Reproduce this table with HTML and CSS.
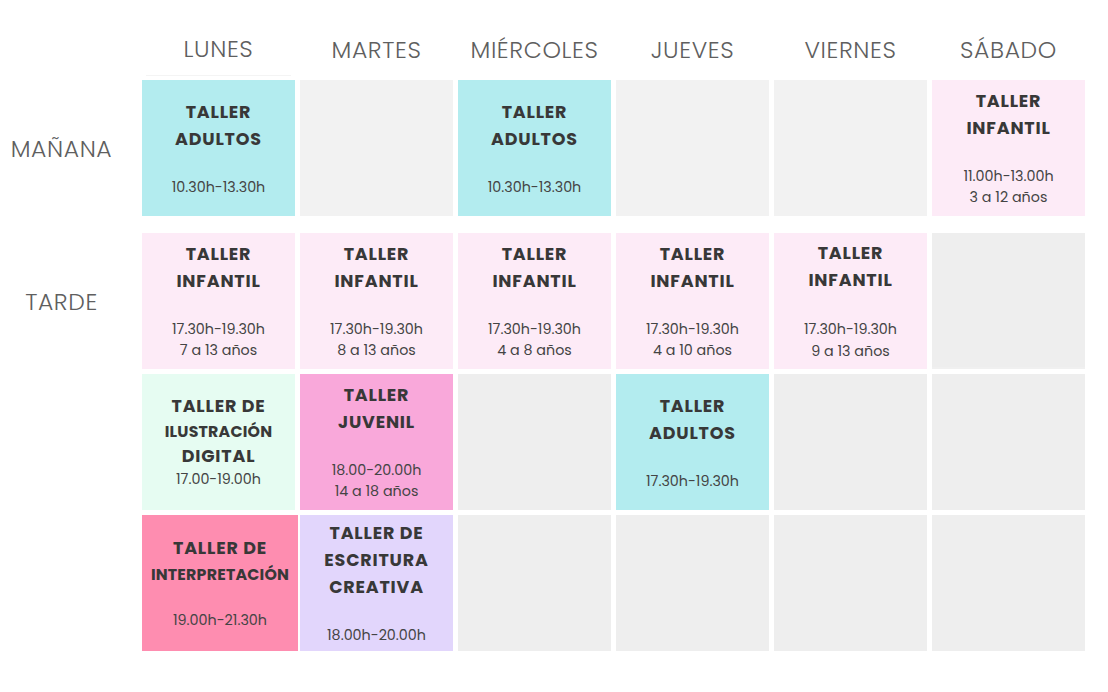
FILE: index.html
```html
<!DOCTYPE html>
<html lang="es">
<head>
<meta charset="utf-8">
<title>Horario de talleres</title>
<link rel="stylesheet" href="styles.css">
</head>
<body>
<main class="schedule">
  <div class="row head">
    <div class="label"></div>
    <div class="day first">LUNES</div>
    <div class="day">MARTES</div>
    <div class="day">MIÉRCOLES</div>
    <div class="day">JUEVES</div>
    <div class="day">VIERNES</div>
    <div class="day">SÁBADO</div>
  </div>

  <section class="block">
    <div class="row">
      <div class="label">MAÑANA</div>
      <div class="cell adult"><p class="title">TALLER<br>ADULTOS</p><p class="time">10.30h-13.30h</p></div>
      <div class="cell empty-light"></div>
      <div class="cell adult"><p class="title">TALLER<br>ADULTOS</p><p class="time">10.30h-13.30h</p></div>
      <div class="cell empty-light"></div>
      <div class="cell empty-light"></div>
      <div class="cell kids"><p class="title">TALLER<br>INFANTIL</p><p class="time">11.00h-13.00h<br>3 a 12 años</p></div>
    </div>
  </section>

  <section class="block tarde">
    <div class="row">
      <div class="label">TARDE</div>
      <div class="cell kids"><p class="title">TALLER<br>INFANTIL</p><p class="time">17.30h-19.30h<br>7 a 13 años</p></div>
      <div class="cell kids"><p class="title">TALLER<br>INFANTIL</p><p class="time">17.30h-19.30h<br>8 a 13 años</p></div>
      <div class="cell kids"><p class="title">TALLER<br>INFANTIL</p><p class="time">17.30h-19.30h<br>4 a 8 años</p></div>
      <div class="cell kids"><p class="title">TALLER<br>INFANTIL</p><p class="time">17.30h-19.30h<br>4 a 10 años</p></div>
      <div class="cell kids"><p class="title">TALLER<br>INFANTIL</p><p class="time loose">17.30h-19.30h<br>9 a 13 años</p></div>
      <div class="cell empty edge"></div>
    </div>
    <div class="row">
      <div class="label"></div>
      <div class="cell mint"><p class="title tight">TALLER DE<br><span class="small">ILUSTRACIÓN</span><br>DIGITAL</p><p class="time nogap">17.00-19.00h</p></div>
      <div class="cell juvenil"><p class="title">TALLER<br>JUVENIL</p><p class="time">18.00-20.00h<br>14 a 18 años</p></div>
      <div class="cell empty"></div>
      <div class="cell adult"><p class="title">TALLER<br>ADULTOS</p><p class="time">17.30h-19.30h</p></div>
      <div class="cell empty"></div>
      <div class="cell empty"></div>
    </div>
    <div class="row">
      <div class="label"></div>
      <div class="cell drama"><p class="title mid">TALLER DE<br><span class="small">INTERPRETACIÓN</span></p><p class="time">19.00h-21.30h</p></div>
      <div class="cell lilac"><p class="title">TALLER DE<br>ESCRITURA<br>CREATIVA</p><p class="time">18.00h-20.00h</p></div>
      <div class="cell empty"></div>
      <div class="cell empty"></div>
      <div class="cell empty"></div>
      <div class="cell empty"></div>
    </div>
  </section>
</main>
</body>
</html>
```
FILE: styles.css
```css
* { box-sizing: border-box; }

html, body {
  margin: 0;
  padding: 0;
  background: #ffffff;
}

body {
  font-family: "Poppins", "Inter", "Liberation Sans", sans-serif;
  color: #3c3c3c;
}

.schedule {
  padding-top: 22px;
  width: 1108px;
}

.block {
  display: flow-root;
}

.row {
  display: grid;
  grid-template-columns: 137px repeat(6, 153px);
  column-gap: 5px;
  margin-bottom: 5px;
}

.head {
  height: 53px;
  align-items: center;
}

.day {
  text-align: center;
  font-size: 23.5px;
  font-weight: 300;
  letter-spacing: 0.6px;
  color: #5f5f5f;
  line-height: 53px;
}

.day.first {
  border-bottom: 1px solid #f4f4f4;
  margin: 0 4px;
}

.block.tarde {
  margin-top: 12px;
}

.label {
  display: flex;
  align-items: center;
  justify-content: center;
  padding-right: 14px;
  font-size: 23.5px;
  font-weight: 300;
  letter-spacing: 0.6px;
  color: #5f5f5f;
}

.cell {
  height: 136px;
  display: flex;
  flex-direction: column;
  justify-content: center;
  align-items: center;
  text-align: center;
}

.cell p { margin: 0; }

.title {
  font-size: 17.5px;
  font-weight: 700;
  line-height: 27px;
  letter-spacing: 0.8px;
  color: #383838;
}

.title.tight { line-height: 25px; }
.title.mid { line-height: 26px; }

.title .small {
  font-size: 15.8px;
  letter-spacing: 0.2px;
}

.time {
  margin-top: 24px !important;
  font-size: 14.3px;
  line-height: 21px;
  color: #444444;
  font-weight: 400;
}

.time.loose { line-height: 22px; }
.time.nogap { margin-top: 0 !important; }
.drama .time { margin-top: 22px !important; }

.adult { background: #b3ecef; }
.kids { background: #fdebf7; }
.empty-light { background: #f2f2f2; }
.empty { background: #eeeeee; }
.edge { border-bottom: 2px solid #f0f0f0; }
.mint { background: #e6fcf2; }
.juvenil { background: #f9a8da; }
.drama { background: #fe8db0; margin-right: -3px; }
.lilac { background: #e2d6fc; }
```
